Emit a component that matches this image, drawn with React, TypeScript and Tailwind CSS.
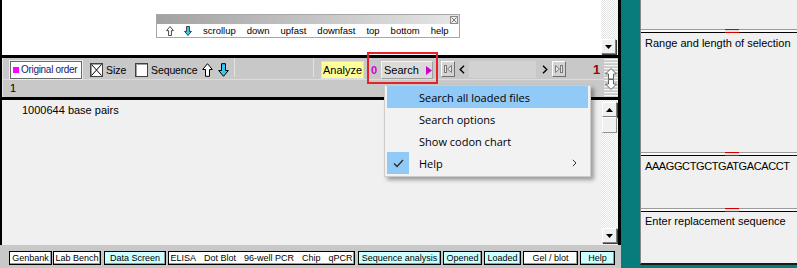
import React from "react";

function BlockUp({ fill = "#ffffff", stroke = "#000000", w = 11, h = 14 }: { fill?: string; stroke?: string; w?: number; h?: number }) {
  return (
    <svg width={w} height={h} viewBox="0 0 11 14" className="block">
      <path d="M5.5 0.7 L10.3 6.5 L7.5 6.5 L7.5 13.3 L3.5 13.3 L3.5 6.5 L0.7 6.5 Z" fill={fill} stroke={stroke} strokeWidth="1" strokeLinejoin="miter" />
    </svg>
  );
}

function BlockDown({ fill = "#36c8ee", stroke = "#000000", w = 11, h = 14 }: { fill?: string; stroke?: string; w?: number; h?: number }) {
  return (
    <svg width={w} height={h} viewBox="0 0 11 14" className="block">
      <path d="M5.5 13.3 L10.3 7.5 L7.5 7.5 L7.5 0.7 L3.5 0.7 L3.5 7.5 L0.7 7.5 Z" fill={fill} stroke={stroke} strokeWidth="1" strokeLinejoin="miter" />
    </svg>
  );
}

function ScrollBtn({ dir }: { dir: "up" | "down" }) {
  return (
    <div className="w-[15px] h-[15px] shrink-0 bg-[#f0f0f0] border border-t-[#ffffff] border-l-[#ffffff] border-r-[#808080] border-b-[#808080] shadow-[1px_1px_0_#404040] flex items-center justify-center">
      <svg width="7" height="4" viewBox="0 0 7 4" className="block">
        <path d={dir === "up" ? "M0 4 L3.5 0 L7 4 Z" : "M0 0 L3.5 4 L7 0 Z"} fill="#000" />
      </svg>
    </div>
  );
}

function Checkbox({ checked }: { checked?: boolean }) {
  return (
    <div className="w-[13px] h-[14px] shrink-0 bg-white border border-[#404040] shadow-[inset_1px_1px_0_#a0a0a0] flex items-center justify-center">
      {checked && (
        <svg width="11" height="12" viewBox="0 0 11 12" className="block">
          <path d="M0.5 0.5 L10.5 11.5 M10.5 0.5 L0.5 11.5" stroke="#000" strokeWidth="1" />
        </svg>
      )}
    </div>
  );
}

function NavBtn({ dir }: { dir: "first" | "last" }) {
  return (
    <div className="w-[14px] h-[16px] bg-[#d4d4d4] border border-t-[#ffffff] border-l-[#ffffff] border-r-[#707070] border-b-[#707070] flex items-center justify-center">
      <svg width="10" height="10" viewBox="0 0 10 10" className="block">
        {dir === "first" ? (
          <>
            <rect x="1.5" y="1.5" width="2" height="7" fill="#e8e8e8" stroke="#7a7a7a" strokeWidth="1" />
            <path d="M8.5 1.5 L4.5 5 L8.5 8.5 Z" fill="#e8e8e8" stroke="#7a7a7a" strokeWidth="1" />
          </>
        ) : (
          <>
            <rect x="6.5" y="1.5" width="2" height="7" fill="#e8e8e8" stroke="#7a7a7a" strokeWidth="1" />
            <path d="M1.5 1.5 L5.5 5 L1.5 8.5 Z" fill="#e8e8e8" stroke="#7a7a7a" strokeWidth="1" />
          </>
        )}
      </svg>
    </div>
  );
}

function Chevron({ dir }: { dir: "left" | "right" }) {
  return (
    <svg width="6" height="9" viewBox="0 0 6 9" className="block">
      <path d={dir === "left" ? "M5 0.8 L1.2 4.5 L5 8.2" : "M1 0.8 L4.8 4.5 L1 8.2"} fill="none" stroke="#000" strokeWidth="1.4" />
    </svg>
  );
}

function Grip() {
  const lines = [];
  for (let y = 1; y < 39; y += 3) {
    lines.push(<rect key={"l" + y} x="0" y={y} width="14" height="1" fill="#f4f4f4" />);
    lines.push(<rect key={"d" + y} x="0" y={y + 1} width="14" height="1" fill="#d2d2d2" />);
  }
  return (
    <svg width="14" height="39" viewBox="0 0 14 39" className="block">
      {lines}
      <path d="M7 10.5 L12.5 16 L9.5 16 L9.5 21 L4.5 21 L4.5 16 L1.5 16 Z" fill="#ffffff" stroke="#606060" strokeWidth="1" />
      <path d="M7 31.5 L12.5 26 L9.5 26 L9.5 21.5 L4.5 21.5 L4.5 26 L1.5 26 Z" fill="#ffffff" stroke="#606060" strokeWidth="1" />
    </svg>
  );
}

function Divider() {
  return (
    <div className="h-[4px] flex shrink-0">
      <div className="w-[84px] border-t border-t-[#9c9c9c] border-b border-b-[#000000] bg-[#fafafa]" />
      <div className="w-[14px] border-t border-t-[#d40000] border-b border-b-[#d40000] bg-[#e2e2e2]" />
      <div className="flex-1 border-t border-t-[#9c9c9c] border-b border-b-[#000000] bg-[#fafafa]" />
    </div>
  );
}

function Tab({ w, ml, cyan, children }: { w: string; ml: string; cyan?: boolean; children: React.ReactNode }) {
  return (
    <div
      className={
        "h-[14px] shrink-0 overflow-hidden border border-black shadow-[inset_-1px_-1px_0_#9a9a9a] flex items-center justify-center text-[9px] leading-none text-black whitespace-nowrap " +
        (cyan ? "bg-[#ccffff] " : "bg-white ") +
        w +
        " " +
        ml
      }
    >
      {children}
    </div>
  );
}

const track = "bg-[image:repeating-conic-gradient(#e4e4e4_0%_25%,#ffffff_0%_50%)] bg-[length:2px_2px]";

export default function App() {
  return (
    <div className="w-[797px] h-[268px] bg-[#067c7c] flex overflow-hidden relative font-['Liberation_Sans',Arial,sans-serif] text-black">
      {/* LEFT PANEL */}
      <div className="w-[621px] h-full flex flex-col bg-[#c8c8c8] shrink-0">
        {/* top pane */}
        <div className="h-[58px] flex border-l-2 border-l-black border-b-[3px] border-b-black border-r-[3px] border-r-black bg-white shrink-0">
          <div className="flex-1">
            <div className="ml-[154px] mt-[14px] w-[304px] h-[24px] border border-[#a8a8a8] bg-white flex flex-col">
              <div className="h-[9px] bg-gradient-to-r from-[#a2a2a2] to-[#e6e6e6] flex justify-end items-center pr-[1px]">
                <div className="w-[8px] h-[8px] border border-[#8a8a8a] bg-[#f0f0f0] flex items-center justify-center">
                  <svg width="6" height="6" viewBox="0 0 6 6" className="block">
                    <path d="M0.5 0.5 L5.5 5.5 M5.5 0.5 L0.5 5.5" stroke="#777" strokeWidth="1" />
                  </svg>
                </div>
              </div>
              <div className="flex-1 flex items-center pl-[9px] text-[9.5px] leading-none">
                <BlockUp w={8} h={10} />
                <div className="ml-[10px]">
                  <BlockDown w={8} h={10} fill="#3ccbee" />
                </div>
                <div className="ml-[11px] flex gap-[11px]">
                  <span>scrollup</span>
                  <span>down</span>
                  <span>upfast</span>
                  <span>downfast</span>
                  <span>top</span>
                  <span>bottom</span>
                  <span>help</span>
                </div>
              </div>
            </div>
          </div>
          <div className={"w-[17px] flex flex-col justify-end pb-[1px] " + track}>
            <ScrollBtn dir="down" />
          </div>
        </div>

        {/* toolbar */}
        <div className="h-[42px] flex border-l-2 border-l-black border-r-[3px] border-r-black border-b-[3px] border-b-black bg-[#c8c8c8] shrink-0">
          <div className="flex-1 flex flex-col border-l border-l-[#e6e6e6]">
            <div className="h-[22px] flex items-start pt-[3px] text-[11px] leading-none border-b border-b-[#dcdcdc] whitespace-nowrap">
              <div className="ml-[7px] w-[72px] h-[18px] shrink-0 bg-white border border-[#6a6a6a] shadow-[0_0_0_1px_#ececec] flex items-center pl-[2px]">
                <div className="w-[6px] h-[6px] bg-[#ff00ff] shrink-0" />
                <span className="ml-[2px] text-[#1a1a66] text-[10px] tracking-[-0.3px]">Original order</span>
              </div>
              <div className="ml-[8px] w-[45px] shrink-0 flex items-center h-[18px]">
                <Checkbox checked />
                <span className="ml-[3px] text-[10.5px]">Size</span>
              </div>
              <div className="w-[67px] shrink-0 flex items-center h-[18px]">
                <Checkbox />
                <span className="ml-[3px] text-[10.5px] tracking-[-0.1px]">Sequence</span>
              </div>
              <div className="h-[18px] flex items-center shrink-0">
                <BlockUp />
                <div className="ml-[5px]">
                  <BlockDown />
                </div>
              </div>
              <div className="ml-[5px] w-px h-[19px] -mt-[3px] bg-[#e2e2e2] shrink-0" />
              <div className="w-[78px] shrink-0" />
              <div className="w-px h-[19px] -mt-[3px] bg-[#e2e2e2] shrink-0" />
              <div className="ml-[7px] w-[43px] h-[18px] shrink-0 bg-[#ffff99] border border-[#dedede] flex items-center justify-center text-[11px]">
                Analyze
              </div>
              <div className="ml-[7px] w-[7px] h-[18px] shrink-0 flex items-center text-[#d000d0] font-bold text-[11px]">0</div>
              <div className="ml-[3px] w-[52px] h-[18px] shrink-0 bg-[#dadada] border border-t-[#f4f4f4] border-l-[#f4f4f4] border-r-[#a0a0a0] border-b-[#a0a0a0] flex items-center pl-[2px] text-[11px]">
                <span>Search</span>
                <svg width="6" height="9" viewBox="0 0 6 9" className="block ml-[7px]">
                  <path d="M0 0 L6 4.5 L0 9 Z" fill="#d000c8" />
                </svg>
              </div>
              <div className="ml-[8px] shrink-0">
                <NavBtn dir="first" />
              </div>
              <div className="ml-[4px] h-[17px] flex items-center shrink-0">
                <Chevron dir="left" />
              </div>
              <div className="ml-[4px] w-[67px] h-[17px] bg-[#d2d2d2] shrink-0" />
              <div className="ml-[6px] h-[17px] flex items-center shrink-0">
                <Chevron dir="right" />
              </div>
              <div className="ml-[4px] shrink-0">
                <NavBtn dir="last" />
              </div>
              <div className="ml-[27px] h-[16px] flex items-center text-[#a00000] font-bold text-[13px] shrink-0">1</div>
            </div>
            <div className="flex-1 flex items-center pl-[7px] text-[11px] leading-none">1</div>
          </div>
          <div className="w-[14px] shrink-0">
            <Grip />
          </div>
        </div>

        {/* main content */}
        <div className="h-[145px] flex border-l-2 border-l-black border-r-[3px] border-r-black bg-[#f0f0f0] shrink-0">
          <div className="flex-1 pl-[20px] pt-[4px] text-[11px] leading-[13px]">1000644 base pairs</div>
          <div className={"w-[16px] flex flex-col pt-[2px] pb-[2px] " + track}>
            <ScrollBtn dir="up" />
            <div className="w-[15px] h-[16px] bg-[#f0f0f0] border border-t-[#ffffff] border-l-[#ffffff] border-r-[#909090] border-b-[#909090]" />
            <div className="flex-1" />
            <ScrollBtn dir="down" />
          </div>
        </div>

        {/* bottom tabs */}
        <div className="flex-1 flex items-start pt-[6px] pl-[7px] bg-[#c8c8c8] border-l-2 border-l-[#c8c8c8]">
          <Tab w="w-[43px]" ml="">Genbank</Tab>
          <Tab w="w-[48px]" ml="ml-[1px]">Lab Bench</Tab>
          <Tab w="w-[62px]" ml="ml-[3px]" cyan>Data Screen</Tab>
          <Tab w="w-[187px]" ml="ml-[2px]">
            <span className="flex gap-[8px]">
              <span>ELISA</span>
              <span>Dot Blot</span>
              <span>96-well PCR</span>
              <span>Chip</span>
              <span>qPCR</span>
            </span>
          </Tab>
          <Tab w="w-[83px]" ml="ml-[3px]" cyan>Sequence analysis</Tab>
          <Tab w="w-[39px]" ml="ml-[2px]" cyan>Opened</Tab>
          <Tab w="w-[37px]" ml="ml-[2px]" cyan>Loaded</Tab>
          <Tab w="w-[55px]" ml="ml-[2px]">Gel / blot</Tab>
          <Tab w="w-[35px]" ml="ml-[2px]" cyan>Help</Tab>
        </div>
      </div>

      {/* teal gap */}
      <div className="w-[19px] shrink-0" />

      {/* RIGHT PANEL */}
      <div className="w-[157px] h-[265px] flex flex-col bg-[#f0f0f0] border-l border-l-[#8a8a8a] border-b-2 border-b-[#1a1a1a] text-[11px] leading-[13px] whitespace-nowrap overflow-hidden">
        <div className="h-[29px] shrink-0" />
        <Divider />
        <div className="h-[119px] shrink-0 pl-[4px] pt-[4px]">Range and length of selection</div>
        <Divider />
        <div className="h-[52px] shrink-0 pl-[4px] pt-[4px] tracking-[-0.4px]">AAAGGCTGCTGATGACACCT</div>
        <Divider />
        <div className="flex-1 pl-[4px] pt-[3px]">Enter replacement sequence</div>
      </div>

      {/* red highlight around search */}
      <div className="absolute left-[367px] top-[52px] w-[71px] h-[32px] border-2 border-[#e4222c] pointer-events-none" />

      {/* dropdown menu */}
      <div className="absolute left-[384px] top-[85px] w-[207px] h-[92px] bg-[#f2f2f2] border border-[#cccccc] shadow-[3px_3px_4px_rgba(0,0,0,0.35)] px-[2px] font-['Open_Sans','Noto_Sans',sans-serif] text-[11px] leading-none">
        <div className="h-[22px] bg-[#91c9f7] flex items-center pl-[32px]">Search all loaded files</div>
        <div className="h-[22px] flex items-center pl-[32px]">Search options</div>
        <div className="h-[22px] flex items-center pl-[32px]">Show codon chart</div>
        <div className="h-[22px] flex items-center">
          <div className="w-[22px] h-[22px] bg-[#91c9f7] flex items-center justify-center">
            <svg width="11" height="9" viewBox="0 0 11 9" className="block">
              <path d="M1 4.5 L4 7.5 L10 1" fill="none" stroke="#2b2b2b" strokeWidth="1.3" />
            </svg>
          </div>
          <span className="ml-[10px]">Help</span>
          <div className="flex-1" />
          <svg width="5" height="8" viewBox="0 0 5 8" className="block mr-[11px]">
            <path d="M0.8 0.8 L4 4 L0.8 7.2" fill="none" stroke="#333" strokeWidth="1" />
          </svg>
        </div>
      </div>
    </div>
  );
}
